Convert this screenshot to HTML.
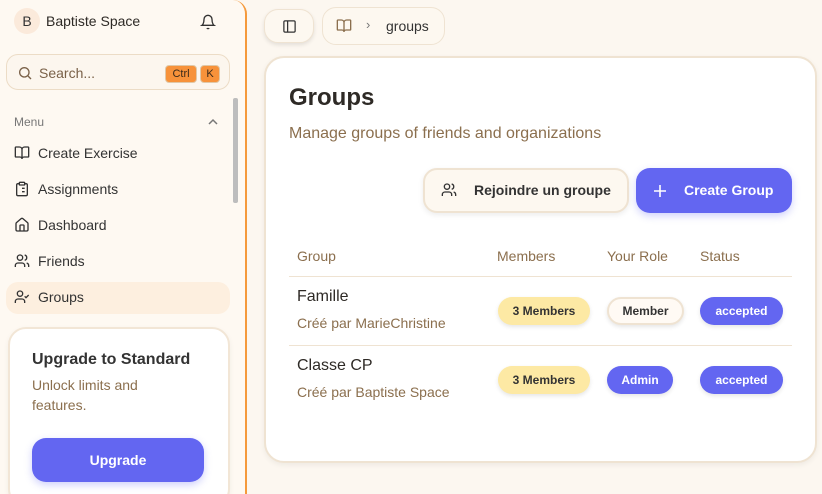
<!DOCTYPE html>
<html style="overflow:hidden;height:494px"><head><meta charset="utf-8"><style>
*{box-sizing:border-box;margin:0;padding:0}
body{width:822px;height:494px;overflow:hidden;background:#fcf7f0;font-family:"Liberation Sans",sans-serif;color:#2e2a26;position:relative}
.side{position:absolute;left:0;top:0;width:247px;height:494px;background:#fef9f2;border-right:2px solid #f59a3c;border-top-right-radius:14px;overflow:hidden}
.abs{position:absolute}
.avatar{left:14px;top:8px;width:26px;height:26px;border-radius:50%;background:#fbeadb;font-size:14px;text-align:center;line-height:26px;color:#333}
.search{left:6px;top:54px;width:224px;height:36px;border:1px solid #ecdcc6;border-radius:12px;background:#fcf6ee}
.kbd{top:10px;height:18px;background:#f7923a;border:1px solid #e0c8a8;border-radius:4px;font-size:11px;line-height:16px;text-align:center;color:#3a2a1a}
.nav{left:14px;font-size:14px;color:#333;display:flex;align-items:center;gap:8px}
.nav svg{width:16px;height:16px}
.card{left:8px;top:327px;width:222px;height:180px;background:#fff;border:2px solid #f2e6d6;border-radius:18px;box-shadow:0 2px 6px rgba(0,0,0,.05)}
.btnp{background:#6366f1;color:#fff;font-weight:bold;border-radius:14px;text-align:center}
.main{left:264px;top:56px;width:553px;height:407px;background:#fff;border:2px solid #efe3d2;border-radius:20px;box-shadow:0 2px 6px rgba(0,0,0,.06)}
.pill{position:absolute;height:28px;border-radius:14px;font-size:12px;font-weight:bold;line-height:28px;text-align:center;box-shadow:0 2px 4px rgba(0,0,0,.1)}
.y{background:#fde9a4;color:#333}
.b{background:#6366f1;color:#fff}
.w{background:#fffaf4;border:2px solid #efe3d2;line-height:24px;color:#333}
.th{font-size:14px;color:#8b6f4e;top:190px}
</style></head><body>
<div class="side">
 <div class="abs avatar">B</div>
 <div class="abs" style="left:46px;top:13px;font-size:14px">Baptiste Space</div>
 <svg class="abs" style="left:200px;top:14px" width="16" height="16" viewBox="0 0 24 24" fill="none" stroke="#333" stroke-width="2"><path d="M6 8a6 6 0 0 1 12 0c0 7 3 9 3 9H3s3-2 3-9"/><path d="M10.3 21a1.9 1.9 0 0 0 3.4 0"/></svg>
 <div class="abs search">
  <svg class="abs" style="left:10px;top:10px" width="16" height="16" viewBox="0 0 24 24" fill="none" stroke="#7a6148" stroke-width="2"><circle cx="11" cy="11" r="7"/><path d="m21 21-4.3-4.3"/></svg>
  <div class="abs" style="left:32px;top:10px;font-size:14px;color:#7a6148">Search...</div>
  <div class="abs kbd" style="left:158px;width:32px">Ctrl</div>
  <div class="abs kbd" style="left:193px;width:20px">K</div>
 </div>
 <div class="abs" style="left:14px;top:115px;font-size:12px;color:#777">Menu</div>
 <svg class="abs" style="left:207px;top:117px" width="12" height="10" viewBox="0 0 12 10" fill="none" stroke="#777" stroke-width="1.5"><path d="M2 7l4-4 4 4"/></svg>
 <div class="abs" style="left:233px;top:98px;width:5px;height:105px;background:#bdbdbd;border-radius:2px"></div>
 <div class="abs nav" style="top:145px"><svg viewBox="0 0 24 24" fill="none" stroke="#333" stroke-width="2"><path d="M12 7v14M3 18a1 1 0 0 1-1-1V4a1 1 0 0 1 1-1h5a4 4 0 0 1 4 4 4 4 0 0 1 4-4h5a1 1 0 0 1 1 1v13a1 1 0 0 1-1 1h-6a3 3 0 0 0-3 3 3 3 0 0 0-3-3z"/></svg>Create Exercise</div>
 <div class="abs nav" style="top:181px"><svg viewBox="0 0 24 24" fill="none" stroke="#333" stroke-width="2"><rect x="8" y="2" width="8" height="4" rx="1"/><path d="M16 4h2a2 2 0 0 1 2 2v14a2 2 0 0 1-2 2H6a2 2 0 0 1-2-2V6a2 2 0 0 1 2-2h2M12 11h4M12 16h4M8 11h.01M8 16h.01"/></svg>Assignments</div>
 <div class="abs nav" style="top:217px"><svg viewBox="0 0 24 24" fill="none" stroke="#333" stroke-width="2"><path d="M15 21v-8a1 1 0 0 0-1-1h-4a1 1 0 0 0-1 1v8"/><path d="M3 10a2 2 0 0 1 .7-1.5l7-6a2 2 0 0 1 2.6 0l7 6A2 2 0 0 1 21 10v9a2 2 0 0 1-2 2H5a2 2 0 0 1-2-2z"/></svg>Dashboard</div>
 <div class="abs nav" style="top:253px"><svg viewBox="0 0 24 24" fill="none" stroke="#333" stroke-width="2"><path d="M16 21v-2a4 4 0 0 0-4-4H6a4 4 0 0 0-4 4v2"/><circle cx="9" cy="7" r="4"/><path d="M22 21v-2a4 4 0 0 0-3-3.9M16 3.1a4 4 0 0 1 0 7.8"/></svg>Friends</div>
 <div class="abs" style="left:6px;top:282px;width:224px;height:32px;background:#fdefdf;border-radius:12px"></div>
 <div class="abs nav" style="top:289px"><svg viewBox="0 0 24 24" fill="none" stroke="#333" stroke-width="2"><path d="m16 11 2 2 4-4"/><path d="M16 21v-2a4 4 0 0 0-4-4H6a4 4 0 0 0-4 4v2"/><circle cx="9" cy="7" r="4"/></svg>Groups</div>
 <div class="abs card">
  <div class="abs" style="left:22px;top:22px;font-size:16px;font-weight:bold;color:#333">Upgrade to Standard</div>
  <div class="abs" style="left:22px;top:46px;font-size:14px;line-height:20px;color:#8b6f4e;width:150px">Unlock limits and features.</div>
  <div class="abs btnp" style="left:22px;top:109px;width:172px;height:44px;line-height:44px;font-size:14px;box-shadow:0 3px 8px rgba(99,102,241,.3)">Upgrade</div>
 </div>
</div>
<div class="abs" style="left:264px;top:9px;width:50px;height:34px;background:#fdf8f0;border:1px solid #efe3d2;border-radius:14px;box-shadow:0 2px 4px rgba(0,0,0,.1)">
 <svg class="abs" style="left:17px;top:9px" width="15" height="15" viewBox="0 0 24 24" fill="none" stroke="#333" stroke-width="2"><rect x="3" y="3" width="18" height="18" rx="2"/><path d="M9 3v18"/></svg>
</div>
<div class="abs" style="left:322px;top:7px;width:123px;height:38px;background:#fdf8f0;border:1px solid #efe3d2;border-radius:14px">
 <svg class="abs" style="left:13px;top:10px" width="16" height="16" viewBox="0 0 24 24" fill="none" stroke="#8b6f4e" stroke-width="2"><path d="M12 7v14M3 18a1 1 0 0 1-1-1V4a1 1 0 0 1 1-1h5a4 4 0 0 1 4 4 4 4 0 0 1 4-4h5a1 1 0 0 1 1 1v13a1 1 0 0 1-1 1h-6a3 3 0 0 0-3 3 3 3 0 0 0-3-3z"/></svg>
 <div class="abs" style="left:43px;top:9px;font-size:13px;color:#777">›</div>
 <div class="abs" style="left:63px;top:10px;font-size:14px;color:#333">groups</div>
</div>
<div class="abs main">
 <div class="abs" style="left:23px;top:26px;font-size:24px;font-weight:bold;color:#2e2a26">Groups</div>
 <div class="abs" style="left:23px;top:67px;font-size:16px;color:#8b6f4e">Manage groups of friends and organizations</div>
 <div class="abs" style="left:157px;top:110px;width:206px;height:45px;background:#fdf8f0;border:2px solid #efe3d2;border-radius:14px;box-shadow:0 2px 6px rgba(0,0,0,.08)">
  <svg class="abs" style="left:16px;top:12px" width="16" height="16" viewBox="0 0 24 24" fill="none" stroke="#333" stroke-width="2"><path d="M16 21v-2a4 4 0 0 0-4-4H6a4 4 0 0 0-4 4v2"/><circle cx="9" cy="7" r="4"/><path d="M22 21v-2a4 4 0 0 0-3-3.9M16 3.1a4 4 0 0 1 0 7.8"/></svg>
  <div class="abs" style="left:49px;top:12px;font-size:14px;font-weight:bold;color:#333">Rejoindre un groupe</div>
 </div>
 <div class="abs btnp" style="left:370px;top:110px;width:156px;height:45px;box-shadow:0 3px 8px rgba(99,102,241,.3)">
  <svg class="abs" style="left:17px;top:16px" width="14" height="14" viewBox="0 0 14 14" fill="none" stroke="#fff" stroke-width="1.6"><path d="M7 1v12M1 7h12"/></svg>
  <div class="abs" style="left:48px;top:14px;font-size:14px">Create Group</div>
 </div>
 <div class="abs th" style="left:31px">Group</div>
 <div class="abs th" style="left:231px">Members</div>
 <div class="abs th" style="left:341px">Your Role</div>
 <div class="abs th" style="left:434px">Status</div>
 <div class="abs" style="left:23px;top:218px;width:503px;height:1px;background:#efe3d2"></div>
 <div class="abs" style="left:31px;top:230px;font-size:16px;color:#2e2a26">Famille</div>
 <div class="abs" style="left:31px;top:257px;font-size:14px;color:#8b6f4e">Créé par MarieChristine</div>
 <div class="pill y" style="left:232px;top:239px;width:92px">3 Members</div>
 <div class="pill w" style="left:341px;top:239px;width:77px">Member</div>
 <div class="pill b" style="left:434px;top:239px;width:83px">accepted</div>
 <div class="abs" style="left:23px;top:287px;width:503px;height:1px;background:#efe3d2"></div>
 <div class="abs" style="left:31px;top:299px;font-size:16px;color:#2e2a26">Classe CP</div>
 <div class="abs" style="left:31px;top:326px;font-size:14px;color:#8b6f4e">Créé par Baptiste Space</div>
 <div class="pill y" style="left:232px;top:308px;width:92px">3 Members</div>
 <div class="pill b" style="left:341px;top:308px;width:66px">Admin</div>
 <div class="pill b" style="left:434px;top:308px;width:83px">accepted</div>
</div>
</body></html>
